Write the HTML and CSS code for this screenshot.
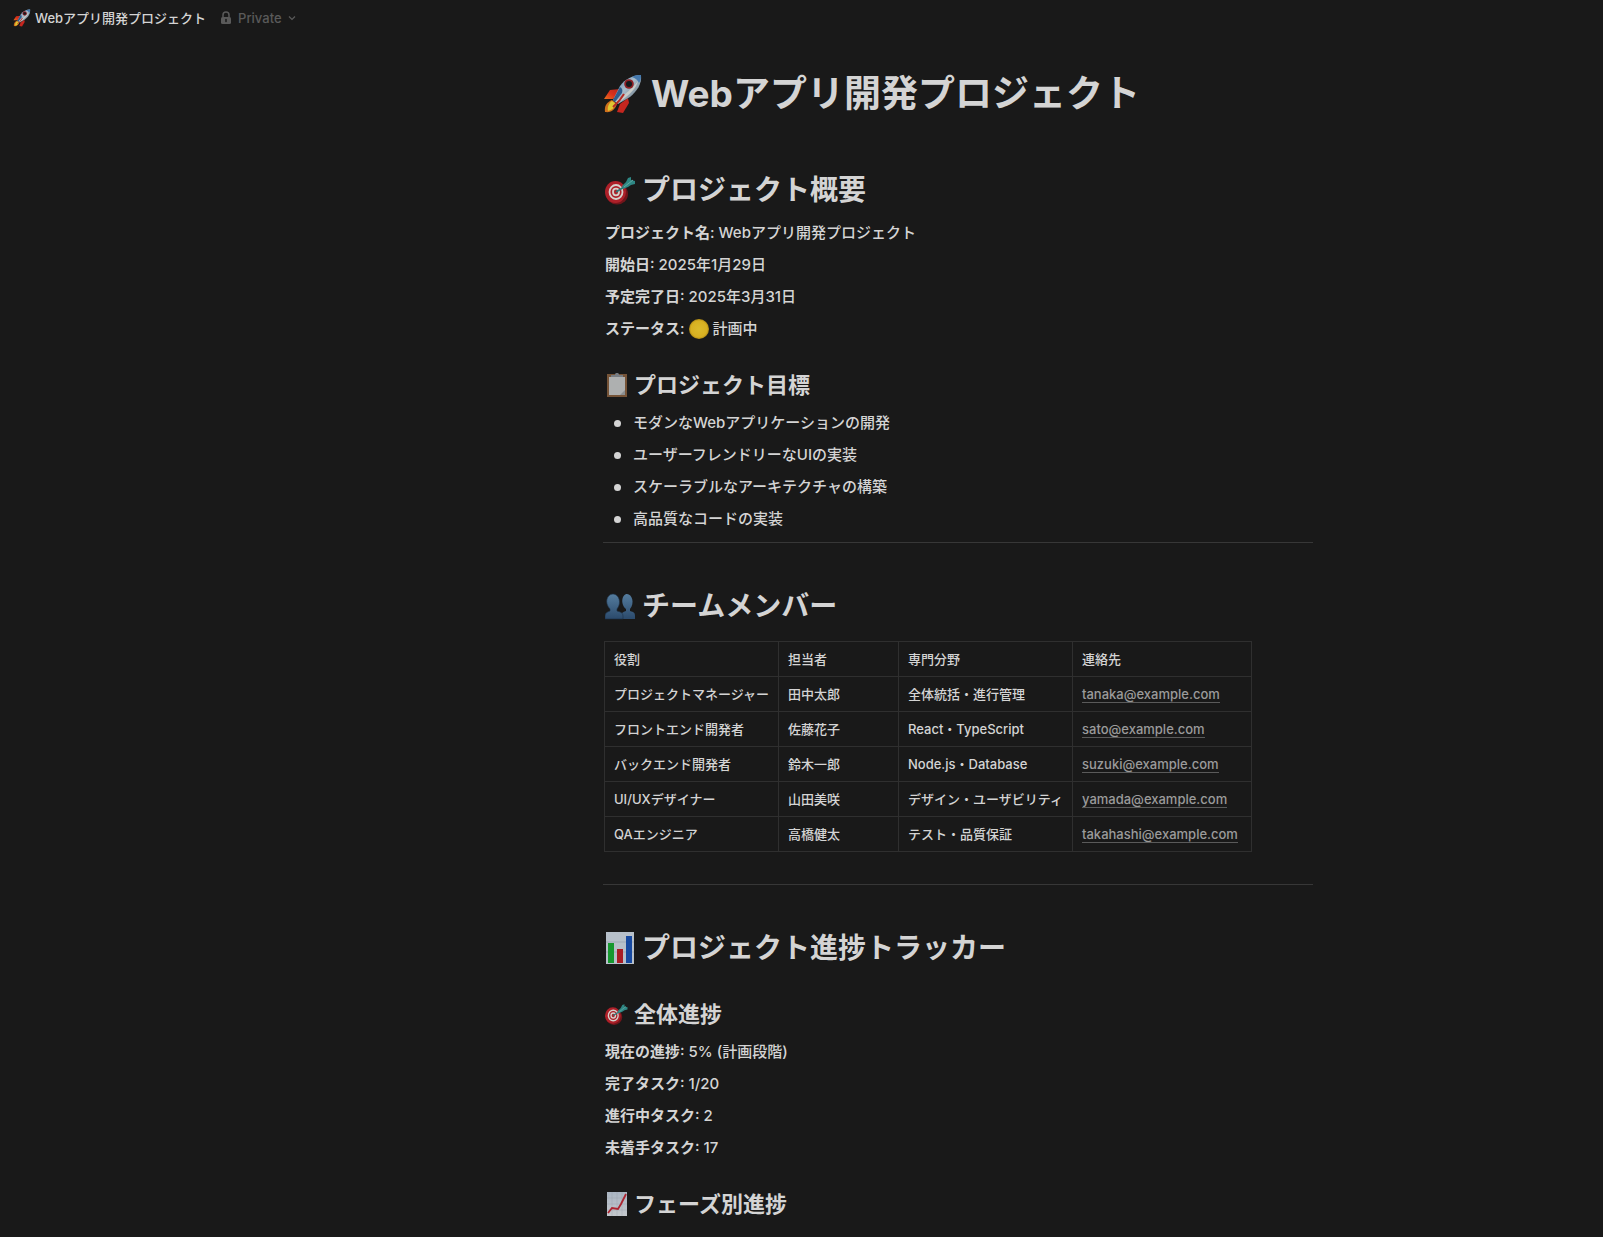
FILE: index.html
```html
<!DOCTYPE html>
<html lang="ja">
<head>
<meta charset="utf-8">
<meta name="viewport" content="width=device-width, initial-scale=1">
<title>Webアプリ開発プロジェクト</title>
<link rel="stylesheet" href="styles.css">
</head>
<body>
<svg class="sprite" aria-hidden="true">
  <defs>
    <linearGradient id="body-blue" x1="0" y1="0" x2="1" y2="1">
      <stop offset="0" stop-color="#3f6f9f"/><stop offset=".45" stop-color="#a9bccb"/><stop offset="1" stop-color="#5d6a73"/>
    </linearGradient>
    <linearGradient id="flame" x1="1" y1="0" x2="0" y2="1">
      <stop offset="0" stop-color="#b8281c"/><stop offset=".5" stop-color="#d8301c"/><stop offset="1" stop-color="#e8701c"/>
    </linearGradient>
    <linearGradient id="people" x1="0" y1="0" x2="0" y2="1">
      <stop offset="0" stop-color="#557d9f"/><stop offset="1" stop-color="#2b4a6c"/>
    </linearGradient>
    <radialGradient id="gold">
      <stop offset="0" stop-color="#dcbb2c"/><stop offset=".8" stop-color="#d8b021"/><stop offset="1" stop-color="#b08a14"/>
    </radialGradient>
    <linearGradient id="sheet" x1="0" y1="0" x2="0" y2="1">
      <stop offset="0" stop-color="#aab5c2"/><stop offset="1" stop-color="#c4c8cc"/>
    </linearGradient>
  </defs>
  <symbol id="rocket" viewBox="0 0 40 40">
    <path d="M17 15 7 16 1 25l9 0 4-4z" fill="url(#flame)"/>
    <path d="M25 24l1 5-6 10-6-1 3-8z" fill="#c4261f"/>
    <path d="M9 26c-5 2-8 6-7 12 7 1 10-3 12-8z" fill="#cf701c"/>
    <path d="M9 27c-3 2-5 6-4 10 4-1 6-3 8-7z" fill="#ddc733"/>
    <path d="M38 1C30 1 22 5 17 12L10 26l5 4 12-7C34 17 39 10 38 1z" fill="url(#body-blue)"/>
    <path d="M35 7C33 14 28 20 15 29l-3-1C22 20 30 14 35 7z" fill="#c9ccc8"/>
    <path d="M17 13c2 1 3 3 2 6l-7 9-2-2z" fill="#2f5c8c"/>
    <path d="M38 1c-3 0-6 0-9 2 3 1 6 3 7 6 2-3 2-5 2-8z" fill="#4478ad"/>
    <circle cx="26" cy="10" r="4.800" fill="#8f1f24"/><circle cx="26" cy="10" r="3" fill="#15191d"/>
    <path d="M21 20Q17 27 10 33" fill="none" stroke="#b52a24" stroke-width="2"/>
  </symbol>
  <symbol id="target" viewBox="0 0 32 32">
    <ellipse cx="12" cy="20" rx="11" ry="10.500" fill="#72151b"/>
    <ellipse cx="10.500" cy="18" rx="10.500" ry="11" fill="#ad2029"/>
    <ellipse cx="11" cy="18" rx="6.500" ry="7" fill="none" stroke="#d5d1cc" stroke-width="1.800"/>
    <ellipse cx="11" cy="18" rx="3" ry="3.300" fill="#ad2029" stroke="#d5d1cc" stroke-width="1.800"/>
    <path d="M11 18 19 13" stroke="#2b7676" stroke-width="1.800"/>
    <path d="M17 12l4-4 2-4 3-1 0 3 4 1 0 3-4 1-3 2-5 2z" fill="#2e8784"/>
    <path d="M19 13 28 6" stroke="#63a8a2" stroke-width="1"/>
  </symbol>
  <symbol id="circle" viewBox="0 0 20 20"><circle cx="10" cy="10" r="10" fill="url(#gold)"/></symbol>
  <symbol id="clipboard" viewBox="0 0 24 24">
    <path d="M2 1h20v23H2z" fill="#765438"/><path d="M4 4h16v18H4z" fill="#aeb0b0"/>
    <path d="M6 4V2h4c0-3 4-3 4 0h4v2z" fill="#777c82"/><path d="M15 22h5v-5z" fill="#8b8f92"/>
  </symbol>
  <symbol id="members" viewBox="0 0 32 32">
    <g fill="url(#people)"><path d="M16 29v-3c0-3 2-4 5-5v-2c-6-5-4-15 1-15s8 9 3 15v2c4 1 5 2 5 5v3z"/><path stroke="#1d3147" stroke-width=".6" d="M0 29v-3c0-3 2-4 5-5v-2C-1 13 2 4 8 4s9 9 4 15v2c4 1 6 2 6 5v3z"/></g>
  </symbol>
  <symbol id="bars" viewBox="0 0 32 32">
    <path d="M1 0h28v32H1z" fill="#b7c0ca"/><path d="M1 10h28M1 20h28" stroke="#8994a0" stroke-width=".5"/>
    <path d="M3 11h6v20H3z" fill="#16982f"/><path d="M12 17h6v14h-6z" fill="#a91c24"/><path d="M21 4h6v27h-6z" fill="#1749a0"/>
  </symbol>
  <symbol id="trend" viewBox="0 0 24 24">
    <path d="M2 0h20v24H2z" fill="url(#sheet)"/><path d="M2 6h20M2 12h20M2 18h20M7 0v24M12 0v24M17 0v24" stroke="#8f9aa5" stroke-width=".3"/>
    <path d="M3 21l4-5 6 1 3-5 5-10" fill="none" stroke="#ad2430" stroke-width="1.800"/>
  </symbol>
</svg>

<header class="topbar">
  <a class="crumb" href="#top"><svg class="emoji emoji-small"><use href="#rocket"/></svg>Webアプリ開発プロジェクト</a>
  <button class="privacy" type="button">
    <svg class="lock" viewBox="0 0 12 14"><path d="M3 6V4a3 3 0 0 1 6 0v2" fill="none" stroke="currentColor" stroke-width="1.500"/><rect x="1" y="6" width="10" height="7" rx="1.500" fill="currentColor"/><path d="M6 8.500v2" stroke="#191919" stroke-width="1.500" stroke-linecap="round"/></svg>
    Private
    <svg class="chevron" viewBox="0 0 8 8"><path d="M1 2.500 4 5.500 7 2.500" fill="none" stroke="currentColor" stroke-width="1.200"/></svg>
  </button>
</header>

<main class="page" id="top">
  <article class="doc">
    <h1><svg class="emoji"><use href="#rocket"/></svg>Webアプリ開発プロジェクト</h1>

    <h2><svg class="emoji"><use href="#target"/></svg>プロジェクト概要</h2>
    <p><strong>プロジェクト名</strong>: Webアプリ開発プロジェクト</p>
    <p><strong>開始日</strong>: 2025年1月29日</p>
    <p><strong>予定完了日</strong>: 2025年3月31日</p>
    <p><strong>ステータス</strong>: <svg class="emoji emoji-inline"><use href="#circle"/></svg> 計画中</p>

    <h3><svg class="emoji"><use href="#clipboard"/></svg>プロジェクト目標</h3>
    <ul>
      <li>モダンなWebアプリケーションの開発</li>
      <li>ユーザーフレンドリーなUIの実装</li>
      <li>スケーラブルなアーキテクチャの構築</li>
      <li>高品質なコードの実装</li>
    </ul>
    <hr>

    <h2><svg class="emoji"><use href="#members"/></svg>チームメンバー</h2>
    <table>
      <colgroup><col class="col-role"><col class="col-name"><col class="col-field"><col class="col-mail"></colgroup>
      <thead>
        <tr><th scope="col">役割</th><th scope="col">担当者</th><th scope="col">専門分野</th><th scope="col">連絡先</th></tr>
      </thead>
      <tbody>
        <tr><td>プロジェクトマネージャー</td><td>田中太郎</td><td>全体統括・進行管理</td><td><a href="mailto:tanaka@example.com">tanaka@example.com</a></td></tr>
        <tr><td>フロントエンド開発者</td><td>佐藤花子</td><td>React・TypeScript</td><td><a href="mailto:sato@example.com">sato@example.com</a></td></tr>
        <tr><td>バックエンド開発者</td><td>鈴木一郎</td><td>Node.js・Database</td><td><a href="mailto:suzuki@example.com">suzuki@example.com</a></td></tr>
        <tr><td>UI/UXデザイナー</td><td>山田美咲</td><td>デザイン・ユーザビリティ</td><td><a href="mailto:yamada@example.com">yamada@example.com</a></td></tr>
        <tr><td>QAエンジニア</td><td>高橋健太</td><td>テスト・品質保証</td><td><a href="mailto:takahashi@example.com">takahashi@example.com</a></td></tr>
      </tbody>
    </table>
    <hr>

    <h2><svg class="emoji"><use href="#bars"/></svg>プロジェクト進捗トラッカー</h2>
    <h3><svg class="emoji"><use href="#target"/></svg>全体進捗</h3>
    <p><strong>現在の進捗</strong>: 5% (計画段階)</p>
    <p><strong>完了タスク</strong>: 1/20</p>
    <p><strong>進行中タスク</strong>: 2</p>
    <p><strong>未着手タスク</strong>: 17</p>

    <h3><svg class="emoji"><use href="#trend"/></svg>フェーズ別進捗</h3>
  </article>
</main>
</body>
</html>
```
FILE: styles.css
```css
* { box-sizing: border-box; }

body {
  margin: 0;
  background: #191919;
  color: #d4d4d4;
  font-family: Inter, "Noto Sans CJK JP", sans-serif;
  font-size: 15px;
  font-weight: 500;
  line-height: 24px;
}

.sprite { position: absolute; width: 0; height: 0; }

.emoji { flex: none; width: 1em; height: 1em; overflow: visible; }

.topbar {
  display: flex;
  align-items: center;
  gap: 8px;
  height: 36px;
  padding: 0 13px;
  font-size: 13px;
  line-height: 20px;
}
.crumb {
  display: flex;
  align-items: center;
  gap: 4px;
  color: inherit;
  text-decoration: none;
}
.emoji-small { width: 18px; height: 18px; }
.privacy {
  display: flex;
  align-items: center;
  gap: 6px;
  padding: 0 6px;
  border: 0;
  background: none;
  color: #5a5a5a;
  font: inherit;
}
.lock { width: 12px; height: 14px; }
.chevron { width: 8px; height: 8px; }

.page {
  display: grid;
  grid-template-columns: 603fr minmax(0, 710px) 290fr;
  padding: 34px 0 16px;
}
.doc { grid-column: 2; }

h1, h2, h3 {
  display: flex;
  align-items: center;
  margin: 0;
  padding-left: 2px;
  font-weight: 600;
}
h1 { padding-left: 0; gap: 8px; font-size: 37px; line-height: 48px; font-weight: 700; }
h1 .emoji { width: 40px; height: 40px; }
h2 { gap: 5px; margin-top: 54px; font-size: 28px; line-height: 36px; }
h2 .emoji { width: 32px; height: 32px; }
h3 { gap: 5px; margin-top: 25px; font-size: 22px; line-height: 30px; }
h3 .emoji { width: 24px; height: 24px; }
h2 + p { margin-top: 9px; }
h3 + p, h3 + ul { margin-top: 7px; }
hr + h2 { margin-top: 45px; }
h2 + h3 { margin-top: 33px; }

p { margin: 0; padding: 4px 2px; }
strong { font-weight: 600; }
.emoji-inline { width: 20px; height: 20px; vertical-align: -5px; }

ul { margin: 0; padding: 0; list-style: none; }
li { display: flex; align-items: center; gap: 12px; padding: 4px 11px; }
li::before { content: ""; width: 7px; height: 7px; border-radius: 50%; background: currentColor; }

hr { height: 1px; margin: 7px 0 0; border: 0; background: #373737; }

table {
  width: 648px;
  max-width: 100%;
  margin: 17px 0 0 1px;
  border-collapse: collapse;
  table-layout: fixed;
  font-size: 13px;
  line-height: 20px;
}
.col-role, .col-field { width: 174px; }
.col-name { width: 120px; }
th, td {
  padding: 7px 9px;
  border: 1px solid #2f2f2f;
  font-weight: 500;
  text-align: left;
  white-space: nowrap;
}
td a {
  border-bottom: 1px solid #5a5a5a;
  color: #9b9b9b;
  text-decoration: none;
}
table + hr { margin-top: 32px; }
```
